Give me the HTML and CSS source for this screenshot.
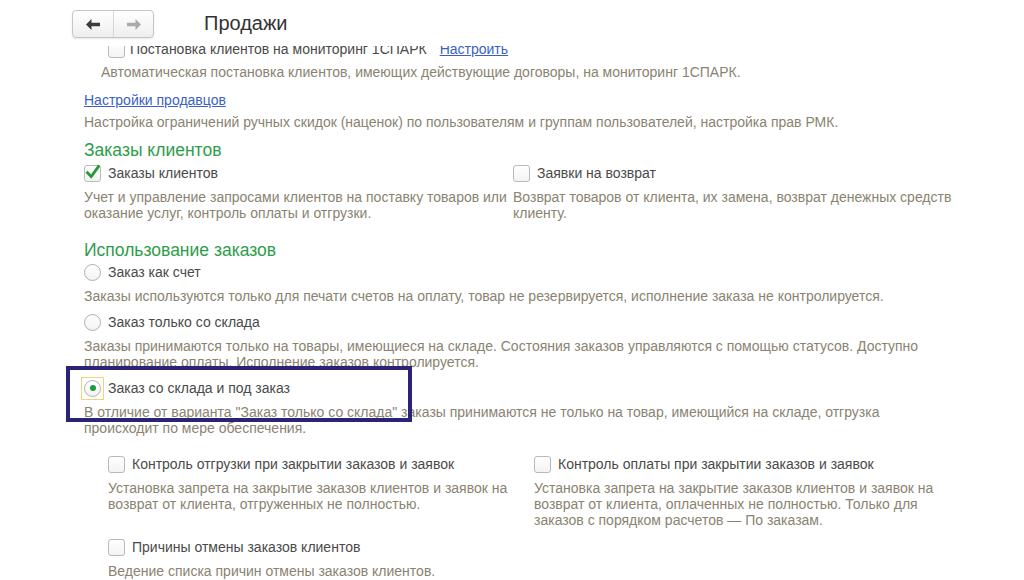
FILE: index.html
```html
<!DOCTYPE html>
<html lang="ru">
<head>
<meta charset="utf-8">
<title>Продажи</title>
<link rel="stylesheet" href="styles.css">
</head>
<body>
<div class="page">
  <header class="topbar">
    <div class="nav">
      <button class="nav-btn" type="button" aria-label="Назад">
        <svg width="15" height="11" viewBox="0 0 15 11"><polygon points="0,5.5 5.5,0 5.5,3.8 14,3.8 14,7.2 5.5,7.2 5.5,11" fill="#3d3d3d"/></svg>
      </button>
      <button class="nav-btn" type="button" aria-label="Вперед">
        <svg width="15" height="11" viewBox="0 0 15 11"><polygon points="15,5.5 9.5,0 9.5,3.8 1,3.8 1,7.2 9.5,7.2 9.5,11" fill="#ababab"/></svg>
      </button>
    </div>
    <h1 class="title">Продажи</h1>
  </header>

  <main class="content">
    <div class="inner">
      <div class="opt opt-first">
        <span class="cb"></span>
        <span class="label">Постановка клиентов на мониторинг 1СПАРК</span>
        <a class="link link-inline" href="#">Настроить</a>
      </div>
      <p class="desc desc-first">Автоматическая постановка клиентов, имеющих действующие договоры, на мониторинг 1СПАРК.</p>

      <a class="link link-block" href="#">Настройки продавцов</a>
      <p class="desc">Настройка ограничений ручных скидок (наценок) по пользователям и группам пользователей, настройка прав РМК.</p>

      <h2 class="section section-first">Заказы клиентов</h2>
      <div class="cols cols-main">
        <div class="col">
          <div class="opt">
            <span class="cb cb-checked"><svg width="17" height="17" viewBox="0 0 17 17"><path d="M3.5 8.8 L7.2 12.6 L14.5 2.5" fill="none" stroke="#259a3a" stroke-width="2.8" stroke-linecap="square"/></svg></span>
            <span class="label">Заказы клиентов</span>
          </div>
          <p class="desc">Учет и управление запросами клиентов на поставку товаров или оказание услуг, контроль оплаты и отгрузки.</p>
        </div>
        <div class="col">
          <div class="opt">
            <span class="cb"></span>
            <span class="label">Заявки на возврат</span>
          </div>
          <p class="desc">Возврат товаров от клиента, их замена, возврат денежных средств клиенту.</p>
        </div>
      </div>

      <h2 class="section section-second">Использование заказов</h2>
      <div class="opt">
        <span class="rb"></span>
        <span class="label">Заказ как счет</span>
      </div>
      <p class="desc">Заказы используются только для печати счетов на оплату, товар не резервируется, исполнение заказа не контролируется.</p>

      <div class="opt opt-next">
        <span class="rb"></span>
        <span class="label">Заказ только со склада</span>
      </div>
      <p class="desc">Заказы принимаются только на товары, имеющиеся на складе. Состояния заказов управляются с помощью статусов. Доступно планирование оплаты. Исполнение заказов контролируется.</p>

      <div class="opt opt-next">
        <span class="rb-focus"><span class="rb rb-on"></span></span>
        <span class="label">Заказ со склада и под заказ</span>
      </div>
      <p class="desc">В отличие от варианта "Заказ только со склада" заказы принимаются не только на товар, имеющийся на складе, отгрузка происходит по мере обеспечения.</p>

      <div class="cols cols-sub">
        <div class="col">
          <div class="opt">
            <span class="cb"></span>
            <span class="label">Контроль отгрузки при закрытии заказов и заявок</span>
          </div>
          <p class="desc">Установка запрета на закрытие заказов клиентов и заявок на возврат от клиента, отгруженных не полностью.</p>
        </div>
        <div class="col">
          <div class="opt">
            <span class="cb"></span>
            <span class="label">Контроль оплаты при закрытии заказов и заявок</span>
          </div>
          <p class="desc">Установка запрета на закрытие заказов клиентов и заявок на возврат от клиента, оплаченных не полностью. Только для заказов с порядком расчетов — По заказам.</p>
        </div>
      </div>

      <div class="sub">
        <div class="opt opt-last">
          <span class="cb"></span>
          <span class="label">Причины отмены заказов клиентов</span>
        </div>
        <p class="desc">Ведение списка причин отмены заказов клиентов.</p>
      </div>
    </div>
    <div class="highlight"></div>
  </main>
</div>
</body>
</html>
```

FILE: styles.css
```css
html, body {
  margin: 0;
  padding: 0;
  background: #ffffff;
}

body {
  font-family: "Liberation Sans", Arial, sans-serif;
  color: #4a4a4a;
}

.page {
  width: 1024px;
  height: 580px;
  overflow: hidden;
}

/* ---------- top bar ---------- */
.topbar {
  height: 46px;
  display: flex;
  align-items: flex-start;
  padding-left: 72px;
  box-sizing: border-box;
  background: #ffffff;
}

.nav {
  margin-top: 10px;
  height: 28px;
  display: flex;
  box-sizing: border-box;
  border: 1px solid #c6c6c6;
  border-radius: 4px;
  background: linear-gradient(#ffffff, #eeeeee);
  box-shadow: 0 1px 2px rgba(0, 0, 0, 0.1);
}

.nav-btn {
  width: 40px;
  height: 26px;
  padding: 0;
  border: 0;
  background: transparent;
  display: flex;
  align-items: center;
  justify-content: center;
}

.nav-btn + .nav-btn {
  border-left: 1px solid #d8d8d8;
}

.title {
  margin: 11px 0 0 50px;
  font-size: 20px;
  line-height: 24px;
  font-weight: normal;
  color: #333333;
}

/* ---------- content ---------- */
.content {
  position: relative;
  height: 534px;
  overflow: hidden;
  padding-left: 84px;
}

.opt {
  height: 24px;
  display: flex;
  align-items: center;
  gap: 7px;
  font-size: 14px;
  color: #4a4a4a;
}

.opt-first {
  margin-top: -9px;
  margin-left: 24px;
  gap: 5px;
}

.opt-next {
  margin-top: 6px;
}

.label {
  white-space: nowrap;
}

.desc {
  max-width: 850px;
  margin: 4px 0 0 0;
  font-size: 14px;
  line-height: 16px;
  color: #8a8371;
}

.desc-first {
  margin-top: 3px;
  margin-left: 17px;
}

.link {
  color: #3b5fc4;
  text-decoration: underline;
  font-size: 14px;
}

.link-inline {
  margin-left: 8px;
}

.link-block {
  display: block;
  width: max-content;
  margin-top: 10px;
  line-height: 20px;
}

.section {
  margin: 0;
  font-size: 17.5px;
  line-height: 20px;
  font-weight: normal;
  color: #2e9d4a;
}

.section-first {
  margin-top: 10px;
}

.section-second {
  margin-top: 19px;
}

.cols {
  display: grid;
}

.cols-main {
  margin-top: 1px;
  grid-template-columns: 429px 450px;
}

.cols-sub {
  margin-top: 16px;
  margin-left: 24px;
  grid-template-columns: 426px 420px;
}

.sub {
  margin-left: 24px;
}

.opt-last {
  margin-top: 7px;
}

/* ---------- controls ---------- */
.cb {
  flex: none;
  width: 17px;
  height: 17px;
  box-sizing: border-box;
  border: 1px solid #b9b9b9;
  border-radius: 3px;
  background: linear-gradient(#ffffff, #f3f3f3);
  position: relative;
}

.cb-checked svg {
  position: absolute;
  left: -1px;
  top: -2px;
}

.rb {
  flex: none;
  width: 17px;
  height: 17px;
  box-sizing: border-box;
  border: 1px solid #b0b0b0;
  border-radius: 50%;
  background: linear-gradient(#ffffff, #f3f3f3);
  display: flex;
  align-items: center;
  justify-content: center;
}

.rb-on::after {
  content: "";
  width: 6px;
  height: 6px;
  border-radius: 50%;
  background: #1f9a3e;
}

.rb-focus {
  flex: none;
  width: 23px;
  height: 23px;
  margin: 0 -3px;
  box-sizing: border-box;
  border: 1px solid #f0d47c;
  display: flex;
  align-items: center;
  justify-content: center;
}

/* annotation overlay */
.highlight {
  position: absolute;
  left: 66px;
  top: 320px;
  width: 346px;
  height: 56px;
  box-sizing: border-box;
  border: 4px solid #2b2476;
  pointer-events: none;
}
```
